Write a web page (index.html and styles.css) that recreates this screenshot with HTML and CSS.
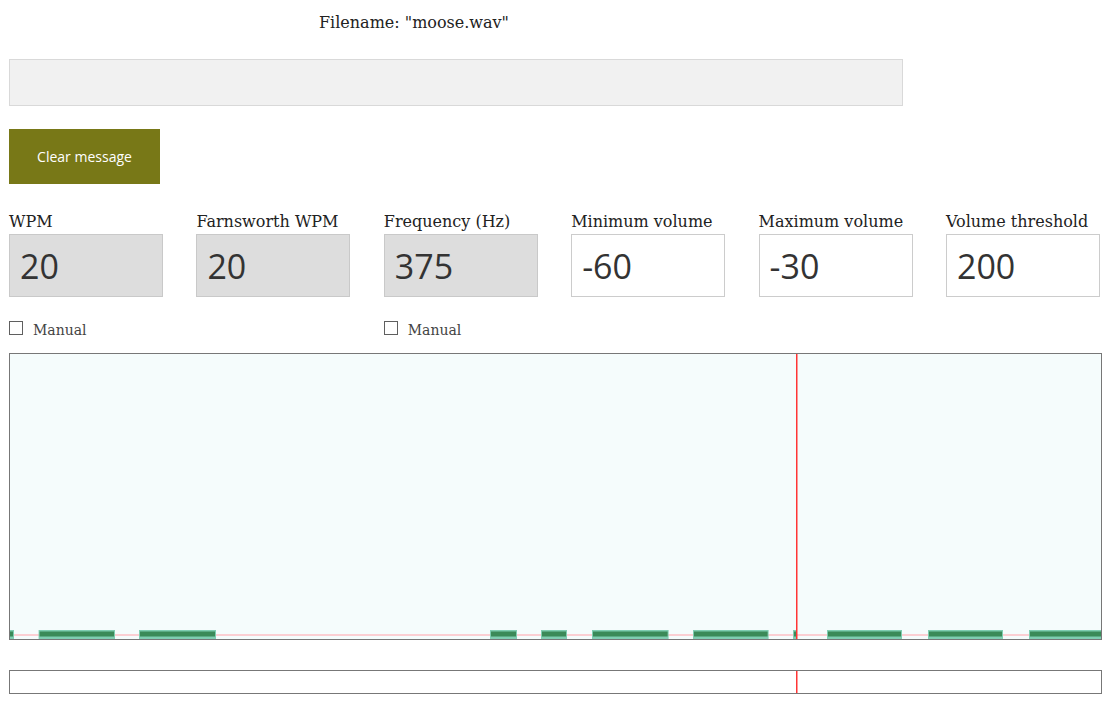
FILE: index.html
```html
<!DOCTYPE html>
<html>
<head>
<meta charset="utf-8">
<link rel="stylesheet" href="styles.css">
</head>
<body>
<div class="page">
  <div class="filename">Filename: "moose.wav"</div>
  <div class="message"></div>
  <button class="clear">Clear message</button>
  <div class="fields">
    <div class="field"><label>WPM</label><input class="num locked" type="text" value="20" readonly></div>
    <div class="field"><label>Farnsworth WPM</label><input class="num locked" type="text" value="20" readonly></div>
    <div class="field"><label>Frequency (Hz)</label><input class="num locked" type="text" value="375" readonly></div>
    <div class="field"><label>Minimum volume</label><input class="num" type="text" value="-60"></div>
    <div class="field"><label>Maximum volume</label><input class="num" type="text" value="-30"></div>
    <div class="field"><label>Volume threshold</label><input class="num" type="text" value="200"></div>
    <div class="check"><input class="box" type="checkbox"><span>Manual</span></div>
    <div class="check empty"></div>
    <div class="check"><input class="box" type="checkbox"><span>Manual</span></div>
  </div>
  <div class="scope">
    <svg class="scope-svg" viewBox="0 0 1091 285" width="1091" height="285">
      <rect x="0" y="280" width="1091" height="2" fill="#fbcfd3"/>
      <g fill="#7fcdb1">
        <rect x="0" y="276" width="4" height="9"/>
        <rect x="28.6" y="276" width="76.4" height="9"/>
        <rect x="129" y="276" width="77" height="9"/>
        <rect x="480" y="276" width="27" height="9"/>
        <rect x="531" y="276" width="26" height="9"/>
        <rect x="582" y="276" width="76.6" height="9"/>
        <rect x="683" y="276" width="75.6" height="9"/>
        <rect x="783" y="276" width="4" height="9"/>
        <rect x="817" y="276" width="75" height="9"/>
        <rect x="918" y="276" width="75" height="9"/>
        <rect x="1019" y="276" width="72" height="9"/>
      </g>
      <g fill="#3b8a58">
        <rect x="0" y="277.5" width="3" height="5"/>
        <rect x="29.6" y="277.5" width="74.4" height="5"/>
        <rect x="130" y="277.5" width="75" height="5"/>
        <rect x="481" y="277.5" width="25" height="5"/>
        <rect x="532" y="277.5" width="24" height="5"/>
        <rect x="583" y="277.5" width="74.6" height="5"/>
        <rect x="684" y="277.5" width="73.6" height="5"/>
        <rect x="784" y="277.5" width="2" height="5"/>
        <rect x="818" y="277.5" width="73" height="5"/>
        <rect x="919" y="277.5" width="73" height="5"/>
        <rect x="1020" y="277.5" width="71" height="5"/>
      </g>
      <rect x="786" y="0" width="1.5" height="285" fill="#ff3535"/>
    </svg>
  </div>
  <div class="timeline">
    <svg class="timeline-svg" viewBox="0 0 1091 22" width="1091" height="22">
      <rect x="786" y="0" width="1.5" height="22" fill="#ff3535"/>
    </svg>
  </div>
</div>
</body>
</html>
```
FILE: styles.css
```css
html, body {
  margin: 0;
  padding: 0;
  background: #ffffff;
}

.page {
  width: 1093px;
  padding-left: 9px;
  font-family: "DejaVu Serif", "Liberation Serif", serif;
  color: #222;
}

.filename {
  height: 46px;
  padding-top: 13px;
  padding-left: 310px;
  font-size: 16px;
  line-height: 20px;
  color: #222;
}

.message {
  box-sizing: border-box;
  width: 894px;
  height: 47px;
  background: #f1f1f1;
  border: 1px solid #d9d9d9;
}

.clear {
  display: block;
  margin-top: 23px;
  width: 151px;
  height: 55px;
  border: none;
  padding: 0;
  background: #787817;
  color: #ffffff;
  font-family: "Open Sans", "Noto Sans", sans-serif;
  font-size: 14px;
}

.fields {
  margin-top: 30px;
  display: grid;
  grid-template-columns: repeat(6, 154px);
  column-gap: 33.4px;
}

.field label {
  display: block;
  height: 20px;
  font-size: 16px;
  line-height: 16px;
  white-space: nowrap;
  color: #222;
}

.num {
  box-sizing: border-box;
  display: block;
  width: 154px;
  height: 63px;
  margin: 0;
  padding: 0 0 0 10px;
  border: 1px solid #cccccc;
  background: #ffffff;
  font-family: "Open Sans", "Noto Sans", sans-serif;
  font-size: 34px;
  color: #333333;
  outline: none;
}

.num.locked {
  background: #dddddd;
  border-color: #c9c9c9;
}

.check {
  margin-top: 24px;
  height: 14px;
  display: flex;
  align-items: center;
  gap: 10px;
}

.box {
  appearance: none;
  -webkit-appearance: none;
  box-sizing: border-box;
  width: 14px;
  height: 14px;
  margin: 0;
  border: 1.5px solid #5f5f5f;
  background: #fff;
}

.check span {
  font-size: 14px;
  color: #444;
  line-height: 14px;
  padding-top: 4px;
}

.scope {
  margin-top: 18px;
  box-sizing: border-box;
  width: 1093px;
  height: 287px;
  border: 1px solid #777777;
  background: #f5fcfc;
}

.scope-svg, .timeline-svg {
  display: block;
}

.timeline {
  margin-top: 30px;
  box-sizing: border-box;
  width: 1093px;
  height: 24px;
  border: 1px solid #777777;
  background: #ffffff;
}
```
